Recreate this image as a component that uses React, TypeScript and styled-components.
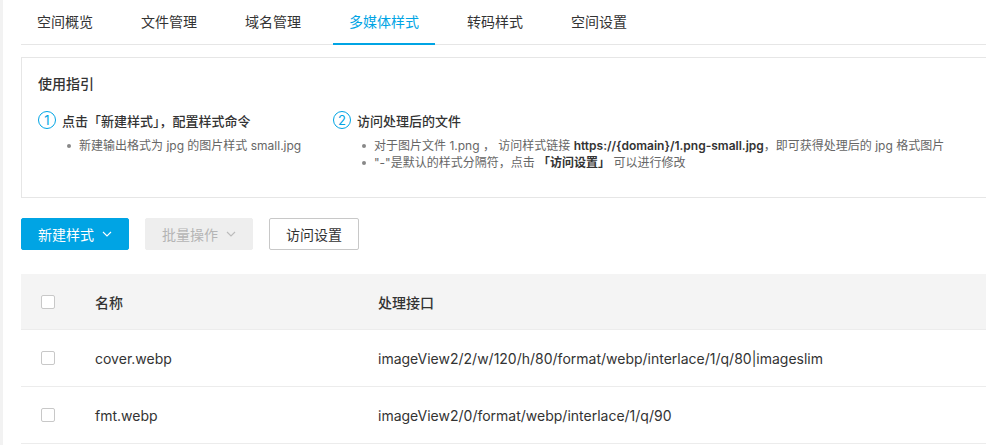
import styled, { createGlobalStyle } from 'styled-components';

const GlobalStyle = createGlobalStyle`
  html, body {
    margin: 0;
    padding: 0;
    background: #fff;
    overflow: hidden;
  }
  body {
    font-family: Inter, "Noto Sans CJK SC", sans-serif;
    color: #333;
  }
`;

const BLUE = '#00a4e4';

const Page = styled.div`
  border-left: 3px solid #f2f2f2;
  padding-left: 18px;
  height: 445px;
  box-sizing: border-box;
`;

const Inner = styled.div`
  width: 1000px;
`;

const TabBar = styled.div`
  display: flex;
  gap: 16px;
  height: 45px;
  border-bottom: 1px solid #e6e6e6;
  box-sizing: border-box;
`;

const Tab = styled.div<{ $active?: boolean }>`
  padding: 0 16px;
  display: flex;
  align-items: center;
  font-size: 14px;
  color: ${({ $active }) => ($active ? BLUE : '#333')};
  border-bottom: 2px solid ${({ $active }) => ($active ? BLUE : 'transparent')};
  margin-bottom: -1px;
  padding-bottom: 1px;
`;

const GuideCard = styled.div`
  margin-top: 12px;
  border: 1px solid #e6e6e6;
  padding: 16px 16px 0;
  height: 141px;
  box-sizing: border-box;
`;

const GuideTitle = styled.div`
  font-size: 14px;
  line-height: 20px;
  font-weight: 500;
  color: #333;
`;

const Steps = styled.div`
  display: flex;
  margin-top: 16px;
`;

const Step = styled.div<{ $width?: number }>`
  width: ${({ $width }) => ($width ? `${$width}px` : 'auto')};
  flex: ${({ $width }) => ($width ? 'none' : '1')};
`;

const StepHead = styled.div`
  display: flex;
  align-items: center;
  gap: 6px;
  height: 20px;
`;

const StepNum = styled.span`
  width: 18px;
  height: 18px;
  box-sizing: border-box;
  border: 1px solid ${BLUE};
  border-radius: 50%;
  color: ${BLUE};
  font-size: 13px;
  display: flex;
  align-items: center;
  justify-content: center;
  line-height: 1;
`;

const StepTitle = styled.span`
  font-size: 13px;
  font-weight: 500;
  color: #333;
`;

const BulletList = styled.ul`
  margin: 7px 0 0;
  padding: 0 0 0 41px;
  list-style: none;
`;

const Bullet = styled.li`
  position: relative;
  font-size: 12px;
  line-height: 17px;
  color: #666;
  white-space: nowrap;

  &::before {
    content: '';
    position: absolute;
    left: -12px;
    top: 7px;
    width: 4px;
    height: 4px;
    border-radius: 50%;
    background: #888;
  }
`;

const Strong = styled.span`
  color: #333;
  font-weight: 600;
`;

const Toolbar = styled.div`
  display: flex;
  gap: 16px;
  margin-top: 20px;
`;

const Button = styled.button<{ $variant: 'primary' | 'disabled' | 'default' }>`
  height: 32px;
  box-sizing: border-box;
  padding: 0 16px;
  border-radius: 2px;
  font-family: inherit;
  font-size: 14px;
  display: flex;
  align-items: center;
  justify-content: center;
  gap: 8px;
  cursor: pointer;
  border: 1px solid
    ${({ $variant }) =>
      $variant === 'primary' ? BLUE : $variant === 'disabled' ? '#eee' : '#c8c8c8'};
  background: ${({ $variant }) =>
    $variant === 'primary' ? BLUE : $variant === 'disabled' ? '#eee' : '#fff'};
  color: ${({ $variant }) =>
    $variant === 'primary' ? '#fff' : $variant === 'disabled' ? '#b5b5b5' : '#333'};
`;

const Table = styled.div`
  margin-top: 24px;
`;

const Row = styled.div<{ $head?: boolean }>`
  display: grid;
  grid-template-columns: 74px 283px 1fr;
  align-items: center;
  height: ${({ $head }) => ($head ? '55px' : '56px')};
  background: ${({ $head }) => ($head ? '#f4f4f4' : '#fff')};
  border-bottom: 1px solid #ececec;
  font-size: 14px;
  color: #333;
  font-weight: ${({ $head }) => ($head ? 500 : 400)};
`;

const CheckCell = styled.div`
  padding-left: 20px;
  display: flex;
  align-items: center;
`;

const CheckBox = styled.span`
  width: 14px;
  height: 14px;
  box-sizing: border-box;
  border: 1px solid #c8c8c8;
  border-radius: 2px;
  background: #fff;
`;

const Cell = styled.div`
  white-space: nowrap;
`;

const Chevron = ({ color }: { color: string }) => (
  <svg width="10" height="6" viewBox="0 0 10 6" fill="none">
    <path d="M1 1l4 4 4-4" stroke={color} strokeWidth="1.1" />
  </svg>
);

const tabs = ['空间概览', '文件管理', '域名管理', '多媒体样式', '转码样式', '空间设置'];

const rows = [
  { name: 'cover.webp', api: 'imageView2/2/w/120/h/80/format/webp/interlace/1/q/80|imageslim' },
  { name: 'fmt.webp', api: 'imageView2/0/format/webp/interlace/1/q/90' },
];

export default function App() {
  return (
    <>
      <GlobalStyle />
      <Page>
        <Inner>
          <TabBar>
            {tabs.map((t) => (
              <Tab key={t} $active={t === '多媒体样式'}>
                {t}
              </Tab>
            ))}
          </TabBar>

          <GuideCard>
            <GuideTitle>使用指引</GuideTitle>
            <Steps>
              <Step $width={295}>
                <StepHead>
                  <StepNum>1</StepNum>
                  <StepTitle>点击「新建样式」，配置样式命令</StepTitle>
                </StepHead>
                <BulletList>
                  <Bullet>新建输出格式为 jpg 的图片样式 small.jpg</Bullet>
                </BulletList>
              </Step>
              <Step>
                <StepHead>
                  <StepNum>2</StepNum>
                  <StepTitle>访问处理后的文件</StepTitle>
                </StepHead>
                <BulletList>
                  <Bullet>
                    对于图片文件 1.png ， 访问样式链接 <Strong>https://{'{domain}'}/1.png-small.jpg</Strong>，即可获得处理后的 jpg 格式图片
                  </Bullet>
                  <Bullet>
                    "-"是默认的样式分隔符，点击 <Strong>「访问设置」</Strong> 可以进行修改
                  </Bullet>
                </BulletList>
              </Step>
            </Steps>
          </GuideCard>

          <Toolbar>
            <Button $variant="primary">
              新建样式 <Chevron color="#fff" />
            </Button>
            <Button $variant="disabled">
              批量操作 <Chevron color="#bbb" />
            </Button>
            <Button $variant="default">访问设置</Button>
          </Toolbar>

          <Table>
            <Row $head>
              <CheckCell>
                <CheckBox />
              </CheckCell>
              <Cell>名称</Cell>
              <Cell>处理接口</Cell>
            </Row>
            {rows.map((r) => (
              <Row key={r.name}>
                <CheckCell>
                  <CheckBox />
                </CheckCell>
                <Cell>{r.name}</Cell>
                <Cell>{r.api}</Cell>
              </Row>
            ))}
          </Table>
        </Inner>
      </Page>
    </>
  );
}
